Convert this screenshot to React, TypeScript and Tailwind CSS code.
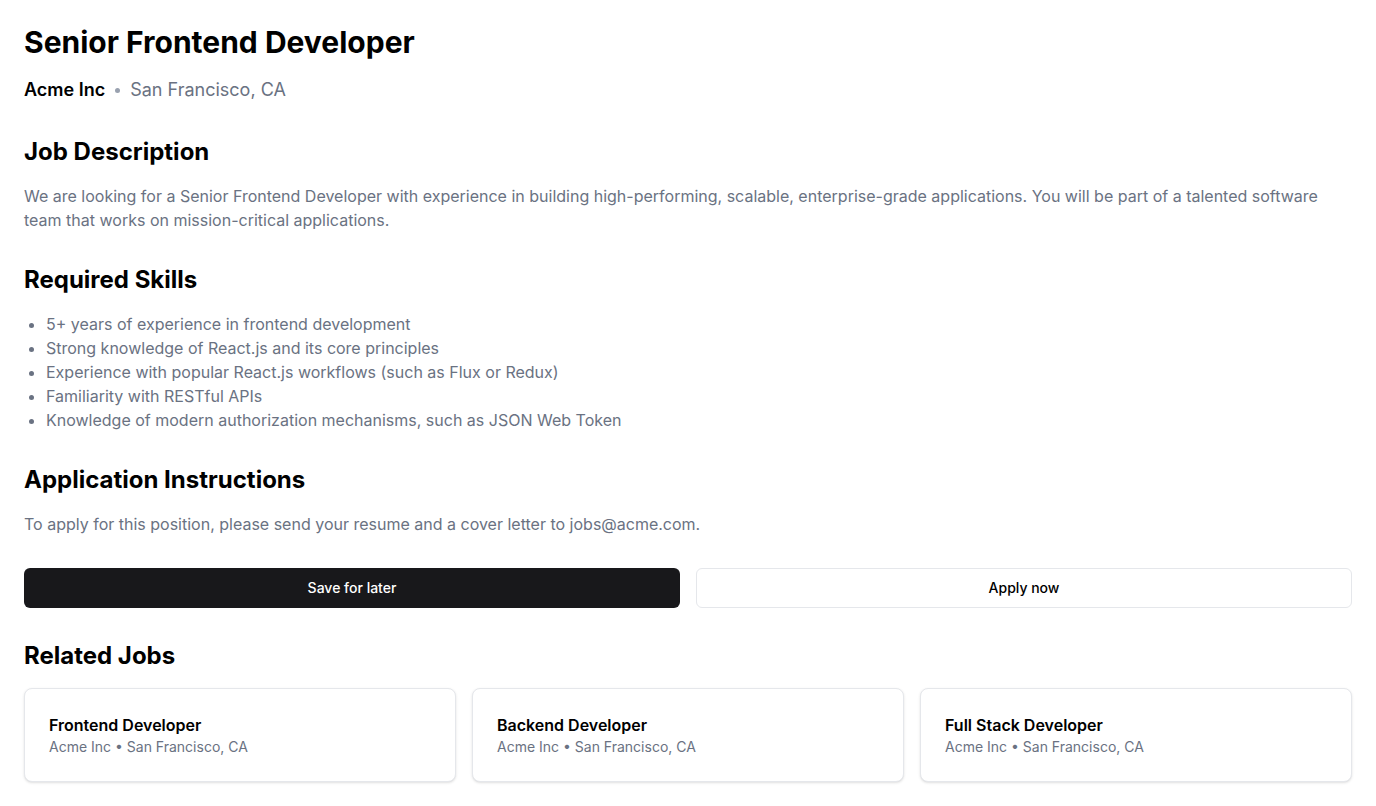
const skills = [
  "5+ years of experience in frontend development",
  "Strong knowledge of React.js and its core principles",
  "Experience with popular React.js workflows (such as Flux or Redux)",
  "Familiarity with RESTful APIs",
  "Knowledge of modern authorization mechanisms, such as JSON Web Token",
];

const relatedJobs = [
  { title: "Frontend Developer", company: "Acme Inc", location: "San Francisco, CA" },
  { title: "Backend Developer", company: "Acme Inc", location: "San Francisco, CA" },
  { title: "Full Stack Developer", company: "Acme Inc", location: "San Francisco, CA" },
];

export default function App() {
  return (
    <div className="min-h-screen bg-white p-6 font-['Inter',sans-serif] text-black antialiased">
      {/* Header */}
      <div>
        <h1 className="text-3xl font-bold">Senior Frontend Developer</h1>
        <div className="mt-4 flex items-center gap-2.5 text-lg">
          <span className="font-semibold">Acme Inc</span>
          <span className="h-[5px] w-[5px] rounded-full bg-gray-400" />
          <span className="text-gray-500">San Francisco, CA</span>
        </div>
      </div>

      <section className="mt-8">
        <h2 className="text-2xl font-bold">Job Description</h2>
        <p className="mt-4 text-base text-gray-500">
          We are looking for a Senior Frontend Developer with experience in building high-performing, scalable,
          enterprise-grade applications. You will be part of a talented software team that works on mission-critical
          applications.
        </p>
      </section>

      <section className="mt-8">
        <h2 className="text-2xl font-bold">Required Skills</h2>
        <ul className="mt-4 list-disc pl-[22px] text-base text-gray-500">
          {skills.map((s) => (
            <li key={s}>{s}</li>
          ))}
        </ul>
      </section>

      <section className="mt-8">
        <h2 className="text-2xl font-bold">Application Instructions</h2>
        <p className="mt-4 text-base text-gray-500">
          To apply for this position, please send your resume and a cover letter to jobs@acme.com.
        </p>
      </section>

      {/* Actions */}
      <div className="mt-8 grid grid-cols-2 gap-4">
        <button className="h-10 rounded-md bg-[#18181b] text-sm font-medium text-white">Save for later</button>
        <button className="h-10 rounded-md border border-gray-200 bg-white text-sm font-medium text-black">
          Apply now
        </button>
      </div>

      <section className="mt-8">
        <h2 className="text-2xl font-bold">Related Jobs</h2>
        <div className="mt-4 grid grid-cols-3 gap-4">
          {relatedJobs.map((job) => (
            <div key={job.title} className="rounded-lg border border-gray-200 bg-white p-6 shadow-sm">
              <h3 className="text-base font-semibold">{job.title}</h3>
              <p className="text-sm text-gray-500">
                {job.company} • {job.location}
              </p>
            </div>
          ))}
        </div>
      </section>
    </div>
  );
}
